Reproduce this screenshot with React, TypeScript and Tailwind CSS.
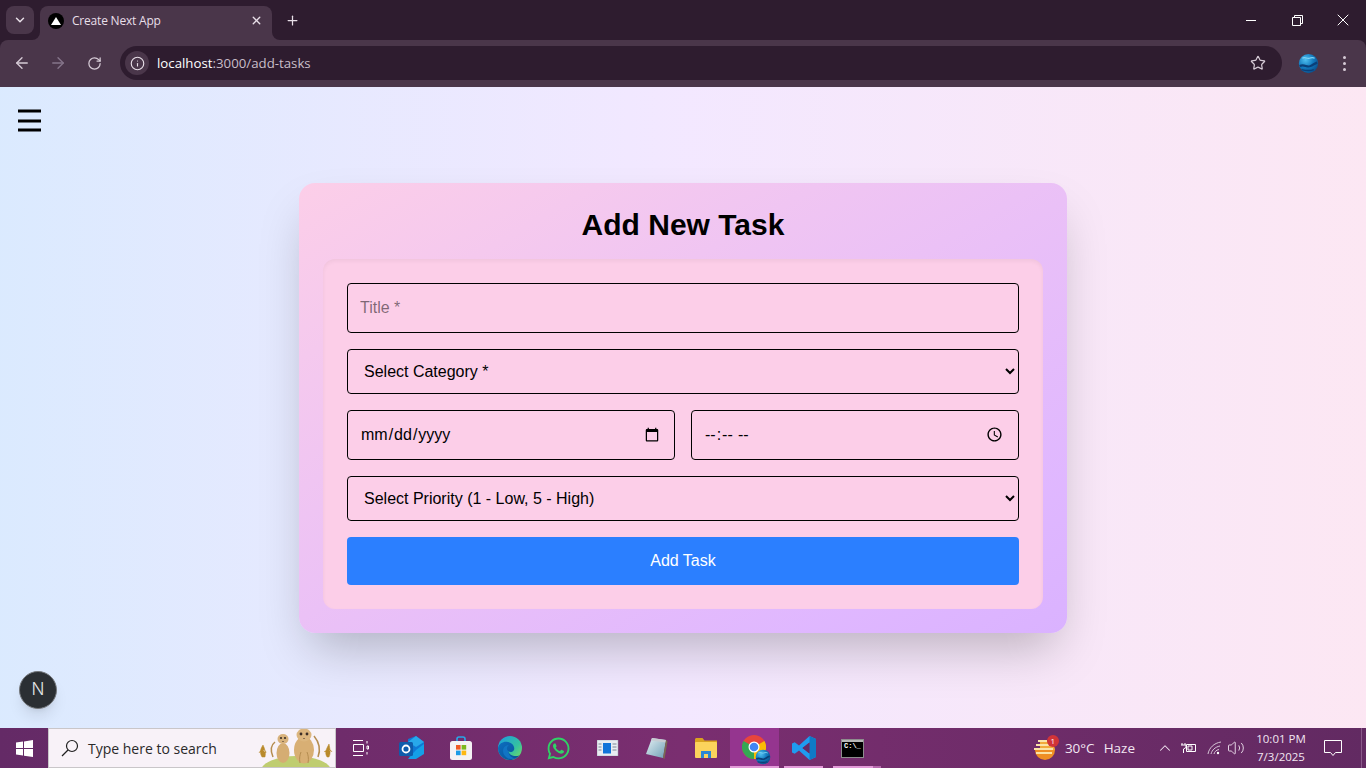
import { ArrowLeft, ArrowRight, ChevronDown, ChevronUp, Info, Plus, RotateCw, Star, Volume2, X } from 'lucide-react';
import { FaWhatsapp } from 'react-icons/fa';

function Globe({ size }: { size: number }) {
  return (
    <svg width={size} height={size} viewBox="0 0 24 24">
      <defs>
        <radialGradient id="globe" cx="35%" cy="30%" r="75%">
          <stop offset="0%" stopColor="#4fc0f0" />
          <stop offset="55%" stopColor="#1279bd" />
          <stop offset="100%" stopColor="#0b4f8c" />
        </radialGradient>
      </defs>
      <circle cx="12" cy="12" r="11" fill="url(#globe)" />
      <path d="M2 15c5-3 8 2 12 0s5-3 8-4" stroke="#0a3f78" strokeWidth="2.5" fill="none" />
      <path d="M5 6c3-2 5 1 8 0s4-1 6 0" stroke="#7fd4f5" strokeWidth="1.4" fill="none" />
      <path d="M4 19c4 1 9 2 14 0" stroke="#0a3f78" strokeWidth="1.6" fill="none" />
    </svg>
  );
}

function WindowsLogo() {
  return (
    <svg width="17" height="17" viewBox="0 0 17 17" fill="#fff">
      <path d="M0 2.600 7 1.600v6.500H0zM8 1.400 17 0v8.100H8zM0 9h7v6.500L0 14.500zM8 9h9v8l-9-1.300z" />
    </svg>
  );
}

function TaskView() {
  return (
    <svg width="17" height="16" viewBox="0 0 17 16" fill="none" stroke="#fff" strokeWidth="1" className="-translate-x-[2px]">
      <path d="M1 .5h10M1 15.500h10M1.500 4.500h10v7h-10zM15 1v2.500M15 6v3h1.500V6zM15 12v2.500" />
    </svg>
  );
}

function OutlookIcon() {
  return (
    <svg width="25" height="24" viewBox="0 0 25 24">
      <path d="M9 3 17 0l8 6v11l-8 5-8-2z" fill="#0f78d4" />
      <path d="M17 0l8 6-8 5-8-5z" fill="#28a8ea" />
      <path d="M25 8v10l-8 5H9l8-9z" fill="#14a0e8" />
      <rect x="0" y="6" width="14" height="14" rx="1.500" fill="#0f5cab" />
      <circle cx="7" cy="13" r="3.500" fill="none" stroke="#fff" strokeWidth="1.800" />
    </svg>
  );
}

function StoreIcon() {
  return (
    <svg width="22" height="24" viewBox="0 0 22 24">
      <path d="M7 6V3a2 2 0 0 1 2-2h4a2 2 0 0 1 2 2v3" fill="none" stroke="#27a7e8" strokeWidth="1.600" />
      <rect x="0" y="5" width="22" height="19" rx="2.500" fill="#f4f2f4" />
      <rect x="6" y="9" width="4.600" height="4.600" fill="#ef5a24" />
      <rect x="11.600" y="9" width="4.600" height="4.600" fill="#7db91f" />
      <rect x="6" y="14.600" width="4.600" height="4.600" fill="#1c9be6" />
      <rect x="11.600" y="14.600" width="4.600" height="4.600" fill="#fdb813" />
    </svg>
  );
}

function EdgeIcon() {
  return (
    <svg width="24" height="24" viewBox="0 0 24 24">
      <defs>
        <linearGradient id="edgeTop" x1="0" y1="0" x2="1" y2="1">
          <stop offset="0%" stopColor="#1b9de2" />
          <stop offset="60%" stopColor="#35c1a0" />
          <stop offset="100%" stopColor="#7fe05a" />
        </linearGradient>
        <linearGradient id="edgeLow" x1="0" y1="0" x2="1" y2="1">
          <stop offset="0%" stopColor="#0c6fc0" />
          <stop offset="100%" stopColor="#0a4f95" />
        </linearGradient>
      </defs>
      <circle cx="12" cy="12" r="12" fill="url(#edgeTop)" />
      <path d="M0 12c1-5 6-7 10-6 5 1 7 5 6 8-1 2-4 3-6 1 1 3 4 5 8 5 2 0 3-.5 4-1.500-2 3-6 5.500-10 5.500C5 24 0 18 0 12z" fill="url(#edgeLow)" />
      <path d="M10 15c-2-2-1-5 1-6-3 0-6 2-6 6 0 3 2 6 5 7.500 2 .7 5 .8 8-.5-4 .5-7-2-8-7z" fill="#1175c4" />
    </svg>
  );
}

function NewsIcon() {
  return (
    <svg width="22" height="16" viewBox="0 0 22 16">
      <rect width="21" height="16" fill="#e9edf2" stroke="#9aa5b1" strokeWidth=".5" />
      <rect x="6" y="3" width="8" height="10.500" fill="#1174d9" />
      <path d="M1.500 4h3M1.500 7h3M1.500 10h3M15.500 4h4M15.500 7h4M15.500 10h4" stroke="#7a8794" strokeWidth="1" />
    </svg>
  );
}

function NotepadIcon() {
  return (
    <svg width="23" height="23" viewBox="0 0 23 23">
      <defs>
        <linearGradient id="pad" x1="0" y1="0" x2="1" y2="1">
          <stop offset="0%" stopColor="#e4f0f4" />
          <stop offset="100%" stopColor="#6f9fb5" />
        </linearGradient>
      </defs>
      <path d="M7 1 21 3 18 21 1 17z" fill="url(#pad)" />
      <path d="M7 1 21 3 20.600 5.500 6 3.500z" fill="#c7ccd2" />
      <path d="M21 3 22.500 4.500 19.500 22 18 21z" fill="#7a6a52" />
    </svg>
  );
}

function FolderIcon() {
  return (
    <svg width="22" height="20" viewBox="0 0 22 20">
      <path d="M0 1.500C0 .7.700 0 1.500 0h6l2 2.500H22V5H0z" fill="#d9a21f" />
      <rect y="4" width="22" height="16" rx="1" fill="#fbd35c" />
      <path d="M6 20v-7h10v7h-3v-4H9v4z" fill="#2b87d3" />
    </svg>
  );
}

function ChromeIcon() {
  return (
    <div className="relative h-[26px] w-[26px]">
      <svg width="24" height="24" viewBox="0 0 24 24" className="absolute left-0 top-0">
        <circle cx="12" cy="12" r="12" fill="#e8453c" />
        <path d="M12 12 22.400 6A12 12 0 0 1 12 24z" fill="#fbbc04" />
        <path d="M12 12 12 24A12 12 0 0 1 1.600 6z" fill="#34a853" />
        <circle cx="12" cy="12" r="5.500" fill="#fff" />
        <circle cx="12" cy="12" r="4.300" fill="#4285f4" />
      </svg>
      <div className="absolute -bottom-[4px] -right-[3px]">
        <Globe size={16} />
      </div>
    </div>
  );
}

function VsCodeIcon() {
  return (
    <svg width="24" height="24" viewBox="0 0 24 24">
      <path d="M17.500 0 24 3v18l-6.500 3L7 14.500l-4.300 3.300L0 16.500v-9l2.700-1.300L7 9.500zM17.500 6.500 10.500 12l7 5.500z" fill="#1f9cf0" />
      <path d="M17.500 0 24 3v18l-6.500 3z" fill="#0f7ac6" />
      <path d="M17.500 6.500 10.500 12l7 5.500z" fill="#662a66" />
    </svg>
  );
}

function TerminalIcon() {
  return (
    <div className="flex h-[19px] w-[23px] flex-col border border-[#8d8d8d] bg-black">
      <div className="h-[2px] bg-[#b8b8b8]" />
      <span className="pl-[2px] font-['Liberation_Mono',monospace] text-[7px] font-bold leading-[8px] text-white">C:\_</span>
    </div>
  );
}

function Meerkats() {
  return (
    <svg width="80" height="40" viewBox="0 0 80 40">
      <ellipse cx="42" cy="44" rx="35" ry="15" fill="#bfcd70" />
      <path d="M8 30c-3-5-1-9 1-12 2 4 3 8 2 12zM5 26c1-2 2-3 4-3M12 26c0-2-1-3-3-3M73 30c-3-5 0-9 2-13 1 5 2 9 0 13zM70 25c1-1 3-2 5-1M78 25c-1-2-2-2-3-2" fill="#b98a2c" stroke="#b98a2c" strokeWidth=".5" />
      <path d="M19 30c-3-7-2-12 2-15M64 30c3-8 1-15-4-21" fill="none" stroke="#b58d50" strokeWidth="1.500" />
      <ellipse cx="29" cy="26" rx="6.500" ry="10" fill="#d5ad73" />
      <ellipse cx="29" cy="12" rx="5.500" ry="5" fill="#d8b27c" />
      <circle cx="27" cy="11" r="1.100" fill="#3c2f27" />
      <circle cx="31" cy="11" r="1.100" fill="#3c2f27" />
      <path d="M28 14h2l-1 1z" fill="#3c2f27" />
      <ellipse cx="50" cy="23" rx="10" ry="13.500" fill="#d8af74" />
      <ellipse cx="50" cy="8" rx="7.500" ry="6.500" fill="#dcb67e" />
      <circle cx="47" cy="7" r="1.400" fill="#3c2f27" />
      <circle cx="53" cy="7" r="1.400" fill="#3c2f27" />
      <path d="M49 11h2l-1 1z" fill="#3c2f27" />
      <path d="M46 36c-1-5 0-8 1-11M54 36c1-5 0-8-1-11" fill="none" stroke="#b58d50" strokeWidth="1" />
    </svg>
  );
}

function WeatherIcon() {
  return (
    <div className="relative h-[24px] w-[26px]">
      <svg width="24" height="23" viewBox="0 0 24 23" className="absolute left-0 top-[1px]">
        <path d="M2 13h20a10 10 0 0 1-20 0z" fill="#ef8f24" />
        <path d="M7 5a10 10 0 0 1 15 8H7z" fill="#f2a93b" />
        <path d="M5 4h9M3 8h13M1 12h19M3 16h16" stroke="#fbe3a6" strokeWidth="1.800" />
      </svg>
      <span className="absolute -top-[1px] right-0 flex h-[12px] w-[12px] items-center justify-center rounded-full bg-[#d13438] text-[8px] leading-none text-white">1</span>
    </div>
  );
}

function TaskbarButton({ children, active, mark }: { children: React.ReactNode; active?: boolean; mark?: string }) {
  return (
    <div className={`relative flex h-full w-[49px] items-center justify-center ${active ? 'bg-[#95358f]' : ''}`}>
      {children}
      {mark === 'full' && <div className="absolute bottom-0 left-0 right-0 h-[2px] bg-[#e29ad8]" />}
      {mark === 'short' && <div className="absolute bottom-0 left-[5px] right-[5px] h-[2px] bg-[#e29ad8]" />}
      {mark === 'double' && <div className="absolute bottom-0 left-[5px] h-[2px] w-[40px] bg-[#e29ad8]" />}
      {mark === 'double' && <div className="absolute bottom-0 left-[45px] h-[2px] w-[8px] bg-[#b668ad]" />}
    </div>
  );
}

export default function App() {
  return (
    <div className="flex h-screen w-full flex-col overflow-hidden bg-[#2e1c2f] font-['Liberation_Sans',Arial,sans-serif]">
      {/* Browser tab strip */}
      <div className="flex h-[40px] shrink-0 items-end pl-[6px] font-['Open_Sans',sans-serif] text-[#e8dfe8]">
        <div className="mb-[6px] flex h-[28px] w-[28px] items-center justify-center rounded-lg bg-[#4a364a]">
          <ChevronDown size={14} strokeWidth={2.5} />
        </div>
        <div className="relative ml-[6px] flex h-[34px] w-[232px] items-center rounded-t-lg bg-[#4a364a] pb-[5px] pl-[8px] pr-[9px]">
          <div className="flex h-[16px] w-[16px] items-center justify-center rounded-full bg-black">
            <div className="h-0 w-0 border-x-[5px] border-b-[8px] border-x-transparent border-b-white" />
          </div>
          <span className="ml-[8px] text-[12px] tracking-[-0.2px]">Create Next App</span>
          <X size={13} strokeWidth={2.5} className="ml-auto" />
          {/* flares joining the tab to the toolbar */}
          <div className="absolute -left-[8px] bottom-0 h-[8px] w-[8px] bg-[#4a364a]">
            <div className="h-full w-full rounded-br-lg bg-[#2e1c2f]" />
          </div>
          <div className="absolute -right-[8px] bottom-0 h-[8px] w-[8px] bg-[#4a364a]">
            <div className="h-full w-full rounded-bl-lg bg-[#2e1c2f]" />
          </div>
        </div>
        <div className="mb-[12px] ml-[13px]">
          <Plus size={15} strokeWidth={2} />
        </div>
        <div className="ml-auto flex h-full items-start text-white">
          <div className="flex h-[40px] w-[46px] items-center justify-center">
            <div className="h-px w-[10px] bg-white" />
          </div>
          <div className="flex h-[40px] w-[46px] items-center justify-center">
            <svg width="11" height="11" viewBox="0 0 11 11" fill="none" stroke="#fff">
              <path d="M.5 2.500h8v8h-8zM2.500 2.500v-2h8v8h-2" />
            </svg>
          </div>
          <div className="flex h-[40px] w-[46px] items-center justify-center">
            <X size={20} strokeWidth={1.2} />
          </div>
        </div>
      </div>

      {/* Browser toolbar */}
      <div className="flex h-[47px] shrink-0 items-center rounded-t-lg bg-[#4a364a] pb-[1px] font-['Open_Sans',sans-serif]">
        <div className="flex w-[120px] items-center pl-[13px] text-[#d6cbd6]">
          <ArrowLeft size={18} strokeWidth={1.8} />
          <ArrowRight size={18} strokeWidth={1.8} className="ml-[18px] text-[#85758a]" />
          <RotateCw size={15} strokeWidth={2} className="ml-[20px]" />
        </div>
        <div className="flex h-[34px] w-[1162px] items-center rounded-full bg-[#2e1c2f] pl-[5px] pr-[16px]">
          <div className="flex h-[24px] w-[24px] items-center justify-center rounded-full bg-[#4a364a] text-[#e8dfe8]">
            <Info size={15} strokeWidth={1.8} />
          </div>
          <span className="ml-[8px] pt-[1px] text-[13.250px] text-white">
            localhost<span className="text-[#c9bec9]">:3000/add-tasks</span>
          </span>
          <Star size={16} strokeWidth={1.8} className="ml-auto text-[#d6cbd6]" />
        </div>
        <div className="ml-[16px]">
          <Globe size={21} />
        </div>
        <div className="ml-[24px] flex flex-col gap-[3px]">
          <div className="h-[3px] w-[3px] rounded-full bg-[#d6cbd6]" />
          <div className="h-[3px] w-[3px] rounded-full bg-[#d6cbd6]" />
          <div className="h-[3px] w-[3px] rounded-full bg-[#d6cbd6]" />
        </div>
      </div>

      {/* Page */}
      <div className="relative flex min-h-0 flex-1 items-center justify-center bg-gradient-to-r from-blue-100 via-purple-100 to-pink-100">
        <button className="absolute left-[18px] top-[22px]">
          <svg width="23" height="23" viewBox="0 0 23 23" className="block">
            <path d="M0 2h23M0 12h23M0 21h23" stroke="#000" strokeWidth="3" />
          </svg>
        </button>

        <div className="w-[768px] rounded-2xl bg-gradient-to-br from-pink-200 to-purple-300 p-6 shadow-2xl">
          <h2 className="mb-4 text-center text-3xl font-bold text-black">Add New Task</h2>
          <form className="space-y-4 rounded-xl bg-pink-200 p-6 shadow-inner">
            <input type="text" placeholder="Title *" className="w-full rounded border border-black p-3" />
            <select className="w-full rounded border border-black p-3 text-black">
              <option>Select Category *</option>
            </select>
            <div className="grid grid-cols-2 gap-4">
              <input type="date" className="w-full rounded border border-black p-3" />
              <input type="time" className="w-full rounded border border-black p-3" />
            </div>
            <select className="w-full rounded border border-black p-3 text-black">
              <option>Select Priority (1 - Low, 5 - High)</option>
            </select>
            <button type="button" className="w-full rounded bg-blue-500 py-3 text-white">Add Task</button>
          </form>
        </div>

        {/* Next dev indicator */}
        <div className="absolute bottom-[19px] left-[19px] flex h-[38px] w-[38px] items-center justify-center rounded-full border border-[#74777b] bg-[#2b2f33] shadow-lg">
          <span className="font-['Inter',sans-serif] text-[17px] font-light text-[#e4e4e4]">N</span>
        </div>
      </div>

      {/* Windows taskbar */}
      <div className="flex h-[40px] shrink-0 items-stretch bg-gradient-to-r from-[#642a66] via-[#7a2e70] to-[#622a62] font-['Open_Sans',sans-serif] text-white">
        <div className="flex w-[48px] items-center justify-center">
          <WindowsLogo />
        </div>
        <div className="relative flex w-[288px] items-center overflow-hidden border border-[#c9c6c9] bg-[#f8f2f8] pl-[12px]">
          <svg width="18" height="18" viewBox="0 0 18 18" fill="none" stroke="#1f1f1f" strokeWidth="1.200">
            <circle cx="11" cy="7" r="5.500" />
            <path d="M7 11 1 17" />
          </svg>
          <span className="ml-[9px] text-[14px] text-[#2a2a2a]">Type here to search</span>
          <div className="absolute bottom-0 right-[1px]">
            <Meerkats />
          </div>
        </div>
        <div className="flex h-full items-center pl-[2px]">
          <TaskbarButton><TaskView /></TaskbarButton>
          <TaskbarButton><OutlookIcon /></TaskbarButton>
          <TaskbarButton><StoreIcon /></TaskbarButton>
          <TaskbarButton><EdgeIcon /></TaskbarButton>
          <TaskbarButton><FaWhatsapp size={25} color="#2fd366" /></TaskbarButton>
          <TaskbarButton><NewsIcon /></TaskbarButton>
          <TaskbarButton><NotepadIcon /></TaskbarButton>
          <TaskbarButton><FolderIcon /></TaskbarButton>
          <TaskbarButton active mark="full"><ChromeIcon /></TaskbarButton>
          <TaskbarButton mark="short"><VsCodeIcon /></TaskbarButton>
          <TaskbarButton mark="double"><TerminalIcon /></TaskbarButton>
        </div>
        <div className="ml-auto flex items-center text-[#f2e6f2]">
          <WeatherIcon />
          <span className="ml-[6px] text-[13.500px]">30°C</span>
          <span className="ml-[9px] text-[13.500px]">Haze</span>
          <ChevronUp size={18} strokeWidth={1.4} className="ml-[21px]" />
          <svg width="16" height="12" viewBox="0 0 16 12" fill="none" stroke="#fff" strokeWidth="1" className="ml-[7px]">
            <path d="M5.500 2.500h9v7h-9zM7 4h4v4H7z" />
            <path d="M1 1v2M4 1v2M0 3h5v2.500L2.500 7v4" />
          </svg>
          <svg width="16" height="14" viewBox="0 0 16 14" fill="none" stroke="#d8c7d8" strokeWidth="1" className="ml-[10px]">
            <path d="M1 13C2 7 7 2 14 1M4 13c1-4 4-7 9-8M7 13c.5-2 2-4 5-4.500" />
            <circle cx="11" cy="12" r="1.200" fill="#fff" stroke="none" />
          </svg>
          <Volume2 size={18} strokeWidth={1.2} className="ml-[4px]" />
          <div className="flex w-[72px] flex-col items-center text-[11.500px] leading-[18px]">
            <span>10:01 PM</span>
            <span>7/3/2025</span>
          </div>
          <svg width="18" height="17" viewBox="0 0 18 17" fill="none" stroke="#fff" className="ml-[7px]">
            <path d="M.5.500h17v12h-6l-2.500 3-2.500-3h-6z" />
          </svg>
          <div className="ml-[19px] mr-[4px] h-full w-px bg-[#8a5a8a]" />
        </div>
      </div>
    </div>
  );
}
